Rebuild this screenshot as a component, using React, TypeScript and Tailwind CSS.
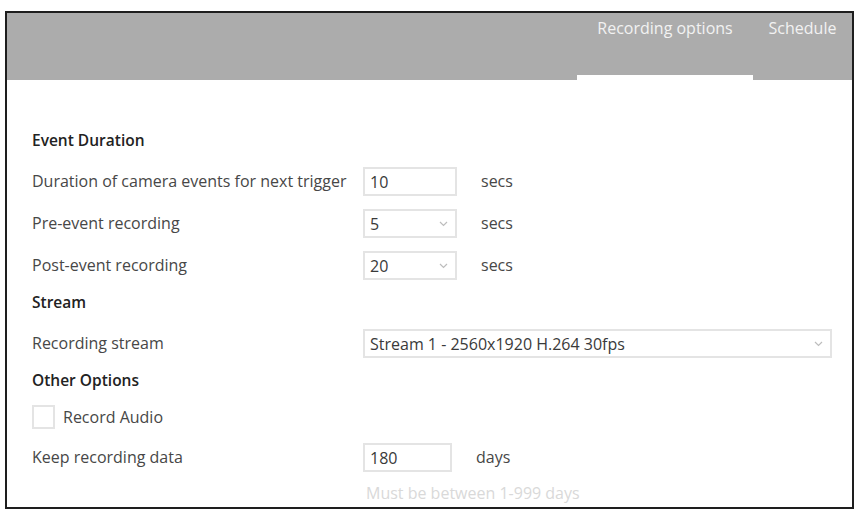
import React from "react";

const font = { fontFamily: '"Open Sans", "Noto Sans", sans-serif' };

function Chevron() {
  return (
    <svg width="9" height="6" viewBox="0 0 9 6" fill="none">
      <path d="M1 1 L4.5 4.5 L8 1" stroke="#bdbdbd" strokeWidth="1.2" />
    </svg>
  );
}

function Box({ value, w, select }: { value: string; w: string; select?: boolean }) {
  return (
    <div
      className={`${w} h-[29px] border-2 border-[#e4e4e4] flex items-center justify-between pl-[5px] pr-[7px] pt-[1px] text-[16px] text-[#3a3a3a]`}
    >
      <span>{value}</span>
      {select ? <Chevron /> : null}
    </div>
  );
}

export default function App() {
  return (
    <div className="w-[859px] h-[512px] bg-white pt-[11px] px-[5px]" style={font}>
      <div className="h-[498px] border-2 border-[#1e1e1e] overflow-hidden flex flex-col bg-white">
        <div className="h-[67px] bg-[#acacac] flex justify-end items-stretch shrink-0">
          <div className="w-[176px] relative flex justify-center pt-[3px] text-[16px] text-[#f2f2f2]">
            Recording options
            <div className="absolute left-0 right-0 bottom-0 h-[5px] bg-white" />
          </div>
          <div className="w-[99px] flex justify-center pt-[3px] text-[16px] text-[#f2f2f2]">
            Schedule
          </div>
        </div>
        <div className="flex flex-col pl-[25px] pt-[41px] text-[16px] text-[#474747]">
          <div className="h-[40px] flex items-center font-semibold text-[15.5px] text-[#222]">Event Duration</div>
          <div className="h-[40px] flex items-center">
            <div className="w-[331px]">Duration of camera events for next trigger</div>
            <Box value="10" w="w-[94px]" />
            <div className="ml-[24px]">secs</div>
          </div>
          <div className="h-[44px] flex items-center">
            <div className="w-[331px]">Pre-event recording</div>
            <Box value="5" w="w-[94px]" select />
            <div className="ml-[24px]">secs</div>
          </div>
          <div className="h-[40px] flex items-center">
            <div className="w-[331px]">Post-event recording</div>
            <Box value="20" w="w-[94px]" select />
            <div className="ml-[24px]">secs</div>
          </div>
          <div className="h-[36px] flex items-center font-semibold text-[15.5px] text-[#222]">Stream</div>
          <div className="h-[44px] flex items-center">
            <div className="w-[331px]">Recording stream</div>
            <Box value="Stream 1 - 2560x1920 H.264 30fps" w="w-[469px]" select />
          </div>
          <div className="h-[32px] flex items-center font-semibold text-[15.5px] text-[#222]">Other Options</div>
          <div className="h-[40px] flex items-center">
            <div className="w-[23px] h-[24px] border-2 border-[#e4e4e4]" />
            <div className="ml-[8px]">Record Audio</div>
          </div>
          <div className="h-[40px] flex items-center">
            <div className="w-[331px]">Keep recording data</div>
            <Box value="180" w="w-[89px]" />
            <div className="ml-[24px]">days</div>
          </div>
          <div className="h-[32px] flex items-center pl-[334px] text-[16px] text-[#d9d9d9]">
            Must be between 1-999 days
          </div>
        </div>
      </div>
    </div>
  );
}
